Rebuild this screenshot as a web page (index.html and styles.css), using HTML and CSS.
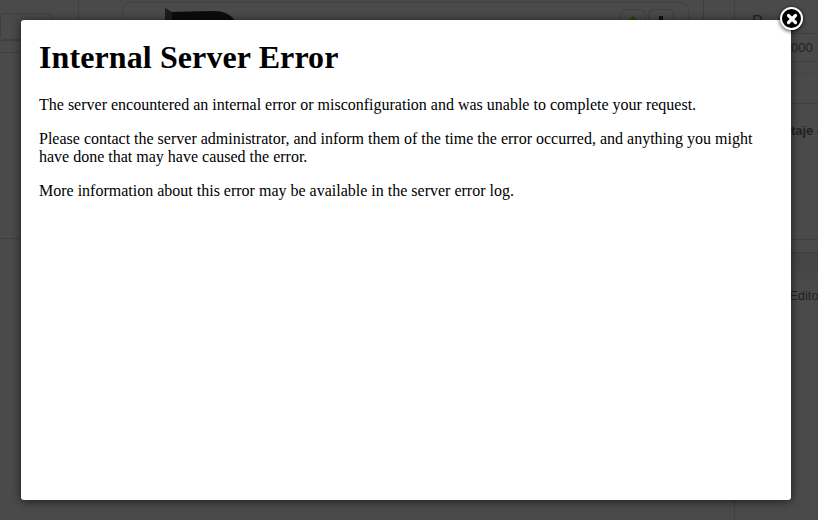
FILE: index.html
```html
<!DOCTYPE html>
<html lang="en">
<head>
  <meta charset="UTF-8">
  <title>Internal Server Error</title>
  <link rel="stylesheet" href="styles.css">
</head>
<body>

<!-- dimmed page behind the error box -->
<div class="page">
  <div class="col-left">
    <div class="left-top">
      <div class="left-field"></div>
    </div>
    <div class="left-row"></div>
  </div>
  <div class="col-main">
    <div class="product-card">
      <svg class="product-pic" width="73" height="20" viewBox="0 0 73 20">
        <path d="M0 3 L7 7 L7 20 L0 20 Z" fill="#1c1c1c"/>
        <path d="M7 7 L48 6 C60 6 68 10 72 20 L7 20 Z" fill="#0b0b0b"/>
      </svg>
      <div class="product-btns">
        <span class="small-btn"><span class="arrow-up"></span></span>
        <span class="small-btn"><span class="mark-dark"></span></span>
      </div>
    </div>
  </div>
  <div class="col-gap"></div>
  <div class="col-right">
    <div class="right-head">P</div>
    <div class="right-price">000</div>
    <div class="right-row"></div>
    <div class="right-label">ntaje de</div>
    <div class="right-line"></div>
    <div class="right-band"></div>
    <div class="right-editor">Editor</div>
  </div>
</div>

<div class="error-box">
  <button class="box-close" aria-label="Close">
    <svg width="12" height="12" viewBox="0 0 12 12">
      <path d="M2.5 2.5 L9.5 9.5 M9.5 2.5 L2.5 9.5" stroke="#fff" stroke-width="3.2" stroke-linecap="round"/>
    </svg>
  </button>
  <h1>Internal Server Error</h1>
  <p>The server encountered an internal error or misconfiguration and was unable to complete your request.</p>
  <p>Please contact the server administrator, and inform them of the time the error occurred, and anything you might have done that may have caused the error.</p>
  <p>More information about this error may be available in the server error log.</p>
</div>

</body>
</html>
```

FILE: styles.css
```css
body {
  margin: 0;
  font-family: 'Liberation Sans', Arial, sans-serif;
  background-color: #4a4a4a;
}

.page {
  display: flex;
  align-items: flex-start;
  height: 520px;
  color: #222;
  font-size: 14px;
}

.col-left {
  width: 79px;
  height: 239px;
  border-right: 1px solid #3f3f3f;
  border-bottom: 1px solid #3f3f3f;
  box-sizing: border-box;
}

.left-top {
  height: 41px;
  border-bottom: 1px solid #3f3f3f;
  padding-top: 13px;
  box-sizing: border-box;
}

.left-field {
  width: 52px;
  height: 27px;
  border: 1px solid #404040;
  border-radius: 4px;
  box-sizing: border-box;
}

.left-row {
  height: 11px;
  border-bottom: 1px solid #3f3f3f;
}

.col-main {
  width: 625px;
  height: 239px;
  padding: 2px 0 0 43px;
  border-right: 1px solid #3f3f3f;
  border-bottom: 1px solid #3f3f3f;
  box-sizing: border-box;
}

.product-card {
  display: flex;
  justify-content: space-between;
  width: 567px;
  height: 60px;
  border: 1px solid #414141;
  border-radius: 8px;
  box-sizing: border-box;
}

.product-pic {
  margin: 2px 0 0 42px;
}

.product-btns {
  display: flex;
  gap: 2px;
  margin: 6px 14px 0 0;
}

.small-btn {
  display: flex;
  justify-content: center;
  width: 26px;
  height: 30px;
  padding-top: 6px;
  border: 1px solid #3f3f3f;
  border-radius: 6px;
  box-sizing: border-box;
}

.arrow-up {
  width: 6px;
  height: 6px;
  margin-top: 1px;
  background-color: #234a0a;
  transform: rotate(45deg);
}

.mark-dark {
  width: 4px;
  height: 10px;
  background-color: #111;
}

.col-gap {
  align-self: stretch;
  width: 30px;
  border-right: 1px solid #3f3f3f;
}

.col-right {
  flex: 1;
  overflow: hidden;
}

.right-head {
  height: 33px;
  padding: 13px 0 0 17px;
  box-sizing: border-box;
  font-size: 16px;
}

.right-price {
  height: 29px;
  padding-left: 56px;
  line-height: 27px;
  border-top: 1px solid #3f3f3f;
  border-bottom: 1px solid #3f3f3f;
  box-sizing: border-box;
  font-size: 13px;
  white-space: nowrap;
}

.right-row {
  height: 12px;
  border-bottom: 1px solid #444;
  box-sizing: border-box;
}

.right-label {
  height: 136px;
  margin-top: 29px;
  padding: 19px 0 0 48px;
  border-top: 1px solid #3f3f3f;
  box-sizing: border-box;
  font-size: 13px;
  font-weight: bold;
  white-space: nowrap;
}

.right-line {
  height: 14px;
  border-top: 1px solid #3f3f3f;
  border-bottom: 1px solid #3f3f3f;
  box-sizing: border-box;
}

.right-band {
  height: 28px;
  background: linear-gradient(#444, #484848);
}

.right-editor {
  padding: 7px 0 0 54px;
  font-size: 13px;
  white-space: nowrap;
}

.error-box {
  position: absolute;
  left: 21px;
  top: 20px;
  width: 770px;
  height: 480px;
  padding: 19px 18px;
  background-color: #fff;
  border-radius: 3px;
  box-sizing: border-box;
  box-shadow: 0 1px 10px rgba(0, 0, 0, 0.65);
  color: #000;
  font-family: 'Liberation Serif', 'Times New Roman', serif;
  font-size: 16px;
  line-height: 18px;
}

.error-box h1 {
  margin: 0 0 20px;
  font-size: 32px;
  line-height: 37px;
  letter-spacing: 0.1px;
}

.error-box p {
  margin: 0 0 16px;
}

.box-close {
  position: absolute;
  top: -13px;
  right: -12px;
  display: flex;
  align-items: center;
  justify-content: center;
  width: 23px;
  height: 23px;
  padding: 0;
  background-color: #000;
  border: 2.5px solid #fff;
  border-radius: 50%;
  box-sizing: border-box;
  box-shadow: 0 1px 4px rgba(0, 0, 0, 0.8);
}
```
